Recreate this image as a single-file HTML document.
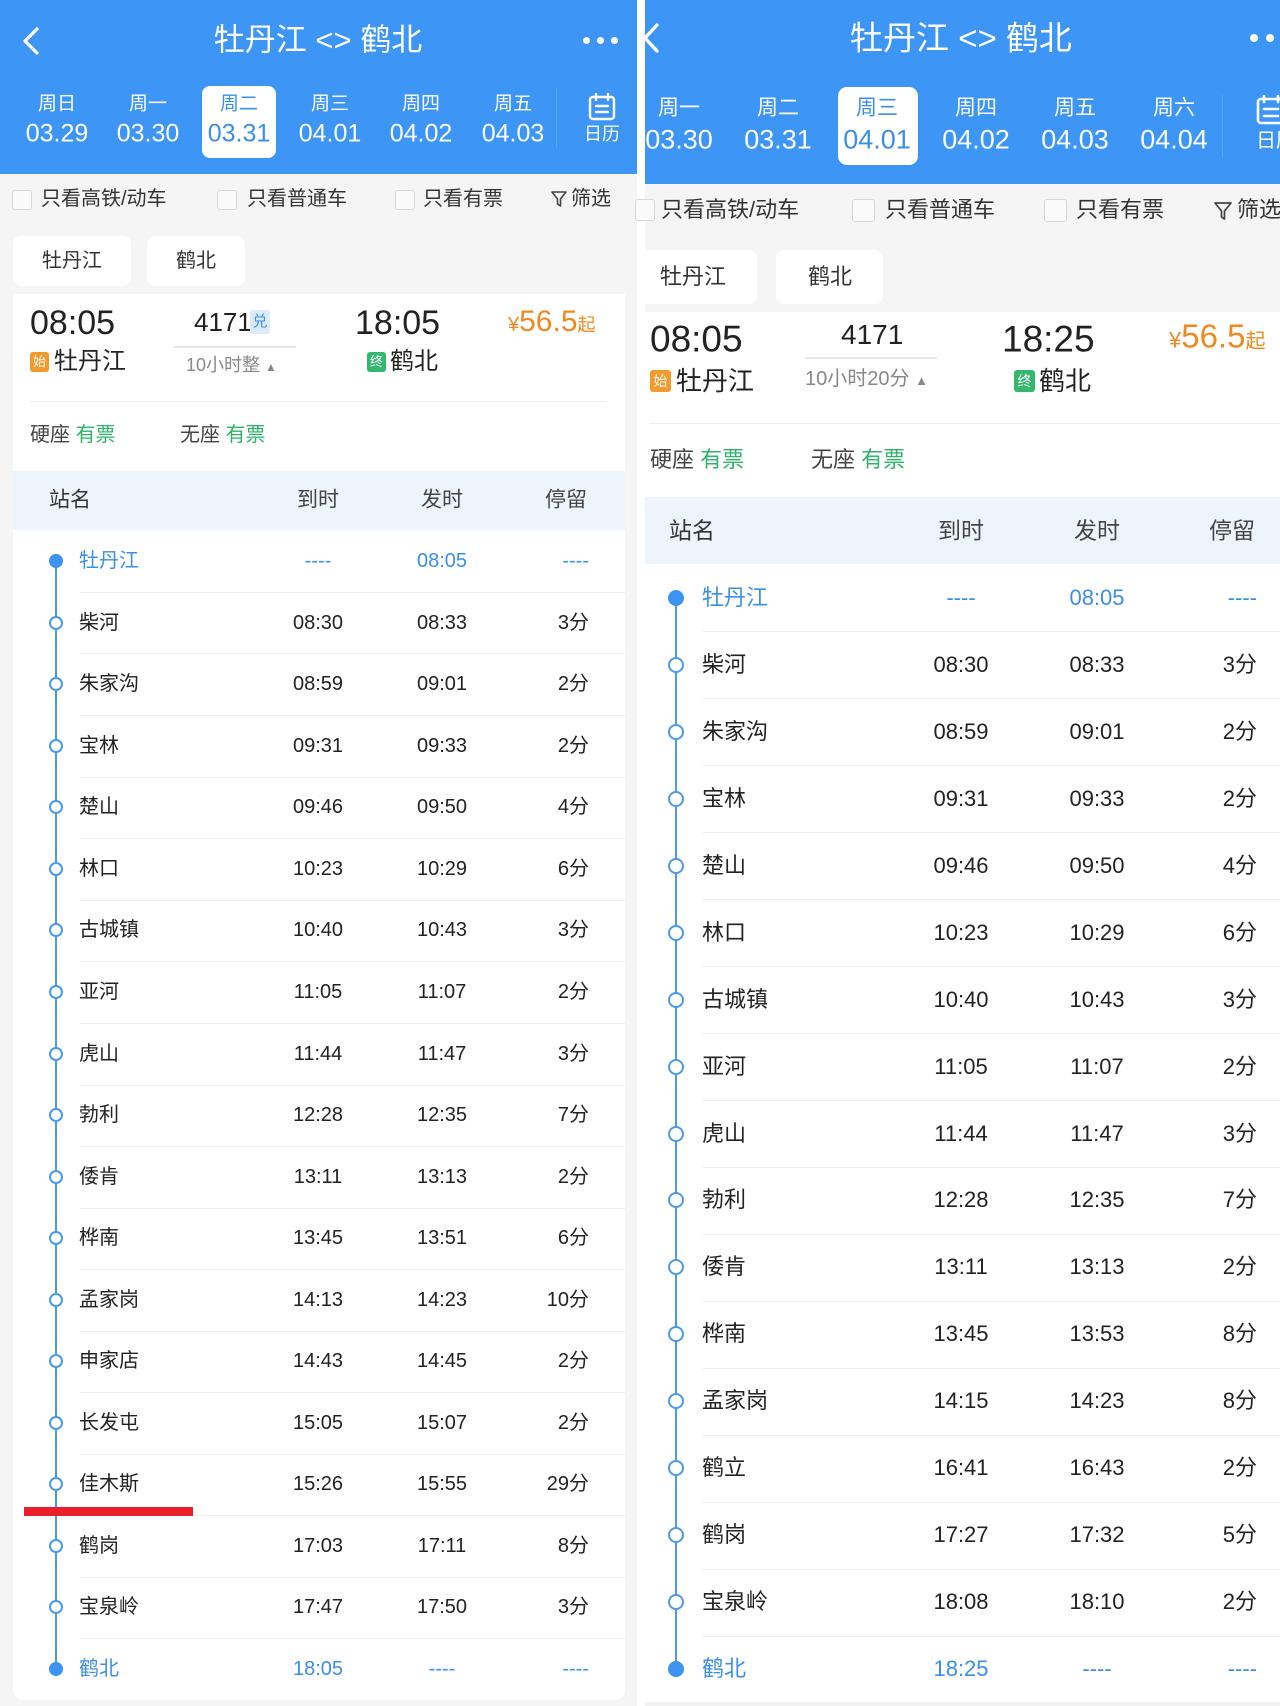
<!DOCTYPE html>
<html><head><meta charset="utf-8">
<style>
*{margin:0;padding:0;box-sizing:border-box}
body{width:1280px;height:1706px;position:relative;overflow:hidden;background:#fff;font-family:"Liberation Sans","Noto Sans CJK SC",sans-serif;color:#222}
.a{position:absolute}
.c{position:absolute;transform:translate(-50%,-50%);white-space:nowrap;line-height:1}
.l{position:absolute;transform:translate(0,-50%);white-space:nowrap;line-height:1}
.r{position:absolute;transform:translate(-100%,-50%);white-space:nowrap;line-height:1}
.w{color:#fff}
.b{color:#3b8fe8}
.g{color:#2db46a}
.gr{color:#666}
.cb{position:absolute;border:1.5px solid #d6d6d6;border-radius:3px;background:#fafafa}
.chip{position:absolute;background:#fff;border-radius:8px}
.sep{position:absolute;height:1px;background:#efefef}
.dot{position:absolute;border:2px solid #4a9ae8;background:#fff;border-radius:50%;transform:translate(-50%,-50%)}
.fd{position:absolute;background:#3d93f0;border-radius:50%;transform:translate(-50%,-50%)}
.L{font-size:20px}
.R{font-size:22px}
</style></head><body>

<!-- LEFT PANEL -->
<div class="a" style="left:0;top:0;width:637px;height:1706px;background:#f5f5f5"></div>
<div class="a" style="left:0;top:0;width:637px;height:174px;background:#3d96f6"></div>
<svg class="a" style="left:20px;top:26px" width="22" height="30" viewBox="0 0 22 30"><path d="M17 3 L5 15 L17 27" fill="none" stroke="#fff" stroke-width="3.2" stroke-linecap="round" stroke-linejoin="round"/></svg>
<div class="c w" style="left:318px;top:40px;font-size:31px">牡丹江 &lt;&gt; 鹤北</div>
<div class="a" style="left:583px;top:37px;width:7px;height:7px;border-radius:50%;background:#fff"></div>
<div class="a" style="left:597px;top:37px;width:7px;height:7px;border-radius:50%;background:#fff"></div>
<div class="a" style="left:611px;top:37px;width:7px;height:7px;border-radius:50%;background:#fff"></div>
<div class="a" style="left:202px;top:86px;width:74px;height:72px;background:#fff;border-radius:8px"></div>
<div class="c w" style="left:57px;top:104px;font-size:19px">周日</div><div class="c w" style="left:57px;top:134px;font-size:25px">03.29</div>
<div class="c w" style="left:148px;top:104px;font-size:19px">周一</div><div class="c w" style="left:148px;top:134px;font-size:25px">03.30</div>
<div class="c b" style="left:239px;top:104px;font-size:19px">周二</div><div class="c b" style="left:239px;top:134px;font-size:25px">03.31</div>
<div class="c w" style="left:330px;top:104px;font-size:19px">周三</div><div class="c w" style="left:330px;top:134px;font-size:25px">04.01</div>
<div class="c w" style="left:421px;top:104px;font-size:19px">周四</div><div class="c w" style="left:421px;top:134px;font-size:25px">04.02</div>
<div class="c w" style="left:513px;top:104px;font-size:19px">周五</div><div class="c w" style="left:513px;top:134px;font-size:25px">04.03</div>
<div class="a" style="left:556px;top:88px;width:1px;height:60px;background:#5aa6f6"></div>
<svg class="a" style="left:588px;top:93px" width="28" height="28" viewBox="0 0 28 28"><rect x="2" y="4" width="24" height="22" rx="3" fill="none" stroke="#fff" stroke-width="2.4"/><path d="M8 1v6M20 1v6M8 13h12M8 19h12" stroke="#fff" stroke-width="2.4" stroke-linecap="round"/></svg>
<div class="c w" style="left:602px;top:134px;font-size:18px">日历</div>

<div class="cb" style="left:12px;top:190px;width:20px;height:20px"></div>
<div class="l" style="left:41px;top:199px;font-size:20px;color:#333">只看高铁/动车</div>
<div class="cb" style="left:217px;top:190px;width:20px;height:20px"></div>
<div class="l" style="left:247px;top:199px;font-size:20px;color:#333">只看普通车</div>
<div class="cb" style="left:395px;top:190px;width:20px;height:20px"></div>
<div class="l" style="left:423px;top:199px;font-size:20px;color:#333">只看有票</div>
<svg class="a" style="left:551px;top:190px" width="16" height="18" viewBox="0 0 16 18"><path d="M1 2h14l-5.5 7v7l-3-2V9z" fill="none" stroke="#444" stroke-width="1.6" stroke-linejoin="round"/></svg>
<div class="l" style="left:571px;top:199px;font-size:20px;color:#333">筛选</div>

<div class="chip" style="left:13px;top:236px;width:118px;height:50px"></div>
<div class="c" style="left:72px;top:261px;font-size:20px;color:#333">牡丹江</div>
<div class="chip" style="left:147px;top:236px;width:98px;height:50px"></div>
<div class="c" style="left:196px;top:261px;font-size:20px;color:#333">鹤北</div>

<div class="a" style="left:13px;top:294px;width:612px;height:1406px;background:#fff;border-radius:0 0 10px 10px"></div>
<div class="l" style="left:30px;top:323px;font-size:34px">08:05</div>
<div class="l" style="left:194px;top:322px;font-size:26px">4171</div>
<div class="a" style="left:250px;top:310px;width:20px;height:24px;background:#dceafb;border-radius:3px;color:#3b8fe8;font-size:15px;line-height:24px;text-align:center">兑</div>
<div class="a" style="left:174px;top:346px;width:122px;height:2px;background:#e6e6e6"></div>
<div class="l gr" style="left:186px;top:365px;font-size:18px;color:#888">10小时整 <span style="font-size:12px">▲</span></div>
<div class="l" style="left:355px;top:323px;font-size:34px">18:05</div>
<div class="l" style="left:508px;top:322px;color:#f0891f"><span style="font-size:20px">¥</span><span style="font-size:30px">56.5</span><span style="font-size:18px">起</span></div>
<div class="a" style="left:30px;top:352px;width:19px;height:20px;background:#f39a2c;border-radius:3px;color:#fff;font-size:13px;line-height:20px;text-align:center">始</div>
<div class="l" style="left:54px;top:362px;font-size:24px">牡丹江</div>
<div class="a" style="left:367px;top:352px;width:19px;height:20px;background:#33b86e;border-radius:3px;color:#fff;font-size:13px;line-height:20px;text-align:center">终</div>
<div class="l" style="left:390px;top:362px;font-size:24px">鹤北</div>
<div class="a" style="left:30px;top:401px;width:576px;height:1px;background:#ececec"></div>
<div class="l" style="left:30px;top:435px;font-size:20px;color:#444">硬座 <span class="g">有票</span></div>
<div class="l" style="left:180px;top:435px;font-size:20px;color:#444">无座 <span class="g">有票</span></div>

<div class="a" style="left:13px;top:471px;width:612px;height:59px;background:#eef4fc"></div>
<div class="l" style="left:49px;top:500px;font-size:21px;color:#333">站名</div>
<div class="c" style="left:318px;top:500px;font-size:21px;color:#444">到时</div>
<div class="c" style="left:442px;top:500px;font-size:21px;color:#444">发时</div>
<div class="c" style="left:566px;top:500px;font-size:21px;color:#444">停留</div>

<div class="a" style="left:55px;top:561px;width:2px;height:1108px;background:#4a9ae8"></div>
<div class="sep" style="left:80px;top:592px;width:545px"></div>
<div class="sep" style="left:80px;top:653px;width:545px"></div>
<div class="sep" style="left:80px;top:715px;width:545px"></div>
<div class="sep" style="left:80px;top:777px;width:545px"></div>
<div class="sep" style="left:80px;top:838px;width:545px"></div>
<div class="sep" style="left:80px;top:900px;width:545px"></div>
<div class="sep" style="left:80px;top:961px;width:545px"></div>
<div class="sep" style="left:80px;top:1023px;width:545px"></div>
<div class="sep" style="left:80px;top:1085px;width:545px"></div>
<div class="sep" style="left:80px;top:1146px;width:545px"></div>
<div class="sep" style="left:80px;top:1208px;width:545px"></div>
<div class="sep" style="left:80px;top:1269px;width:545px"></div>
<div class="sep" style="left:80px;top:1331px;width:545px"></div>
<div class="sep" style="left:80px;top:1392px;width:545px"></div>
<div class="sep" style="left:80px;top:1454px;width:545px"></div>
<div class="sep" style="left:80px;top:1515px;width:545px"></div>
<div class="sep" style="left:80px;top:1577px;width:545px"></div>
<div class="sep" style="left:80px;top:1638px;width:545px"></div>

<div class="fd" style="left:56px;top:561px;width:14px;height:14px"></div>
<div class="l L b" style="left:79px;top:561px">牡丹江</div><div class="c L b" style="left:318px;top:561px">----</div><div class="c L b" style="left:442px;top:561px">08:05</div><div class="r L b" style="left:589px;top:561px">----</div>
<div class="dot" style="left:56px;top:623px;width:14px;height:14px"></div>
<div class="l L" style="left:79px;top:623px">柴河</div><div class="c L" style="left:318px;top:623px">08:30</div><div class="c L" style="left:442px;top:623px">08:33</div><div class="r L" style="left:589px;top:623px">3分</div>
<div class="dot" style="left:56px;top:684px;width:14px;height:14px"></div>
<div class="l L" style="left:79px;top:684px">朱家沟</div><div class="c L" style="left:318px;top:684px">08:59</div><div class="c L" style="left:442px;top:684px">09:01</div><div class="r L" style="left:589px;top:684px">2分</div>
<div class="dot" style="left:56px;top:746px;width:14px;height:14px"></div>
<div class="l L" style="left:79px;top:746px">宝林</div><div class="c L" style="left:318px;top:746px">09:31</div><div class="c L" style="left:442px;top:746px">09:33</div><div class="r L" style="left:589px;top:746px">2分</div>
<div class="dot" style="left:56px;top:807px;width:14px;height:14px"></div>
<div class="l L" style="left:79px;top:807px">楚山</div><div class="c L" style="left:318px;top:807px">09:46</div><div class="c L" style="left:442px;top:807px">09:50</div><div class="r L" style="left:589px;top:807px">4分</div>
<div class="dot" style="left:56px;top:869px;width:14px;height:14px"></div>
<div class="l L" style="left:79px;top:869px">林口</div><div class="c L" style="left:318px;top:869px">10:23</div><div class="c L" style="left:442px;top:869px">10:29</div><div class="r L" style="left:589px;top:869px">6分</div>
<div class="dot" style="left:56px;top:930px;width:14px;height:14px"></div>
<div class="l L" style="left:79px;top:930px">古城镇</div><div class="c L" style="left:318px;top:930px">10:40</div><div class="c L" style="left:442px;top:930px">10:43</div><div class="r L" style="left:589px;top:930px">3分</div>
<div class="dot" style="left:56px;top:992px;width:14px;height:14px"></div>
<div class="l L" style="left:79px;top:992px">亚河</div><div class="c L" style="left:318px;top:992px">11:05</div><div class="c L" style="left:442px;top:992px">11:07</div><div class="r L" style="left:589px;top:992px">2分</div>
<div class="dot" style="left:56px;top:1054px;width:14px;height:14px"></div>
<div class="l L" style="left:79px;top:1054px">虎山</div><div class="c L" style="left:318px;top:1054px">11:44</div><div class="c L" style="left:442px;top:1054px">11:47</div><div class="r L" style="left:589px;top:1054px">3分</div>
<div class="dot" style="left:56px;top:1115px;width:14px;height:14px"></div>
<div class="l L" style="left:79px;top:1115px">勃利</div><div class="c L" style="left:318px;top:1115px">12:28</div><div class="c L" style="left:442px;top:1115px">12:35</div><div class="r L" style="left:589px;top:1115px">7分</div>
<div class="dot" style="left:56px;top:1177px;width:14px;height:14px"></div>
<div class="l L" style="left:79px;top:1177px">倭肯</div><div class="c L" style="left:318px;top:1177px">13:11</div><div class="c L" style="left:442px;top:1177px">13:13</div><div class="r L" style="left:589px;top:1177px">2分</div>
<div class="dot" style="left:56px;top:1238px;width:14px;height:14px"></div>
<div class="l L" style="left:79px;top:1238px">桦南</div><div class="c L" style="left:318px;top:1238px">13:45</div><div class="c L" style="left:442px;top:1238px">13:51</div><div class="r L" style="left:589px;top:1238px">6分</div>
<div class="dot" style="left:56px;top:1300px;width:14px;height:14px"></div>
<div class="l L" style="left:79px;top:1300px">孟家岗</div><div class="c L" style="left:318px;top:1300px">14:13</div><div class="c L" style="left:442px;top:1300px">14:23</div><div class="r L" style="left:589px;top:1300px">10分</div>
<div class="dot" style="left:56px;top:1361px;width:14px;height:14px"></div>
<div class="l L" style="left:79px;top:1361px">申家店</div><div class="c L" style="left:318px;top:1361px">14:43</div><div class="c L" style="left:442px;top:1361px">14:45</div><div class="r L" style="left:589px;top:1361px">2分</div>
<div class="dot" style="left:56px;top:1423px;width:14px;height:14px"></div>
<div class="l L" style="left:79px;top:1423px">长发屯</div><div class="c L" style="left:318px;top:1423px">15:05</div><div class="c L" style="left:442px;top:1423px">15:07</div><div class="r L" style="left:589px;top:1423px">2分</div>
<div class="dot" style="left:56px;top:1484px;width:14px;height:14px"></div>
<div class="l L" style="left:79px;top:1484px">佳木斯</div><div class="c L" style="left:318px;top:1484px">15:26</div><div class="c L" style="left:442px;top:1484px">15:55</div><div class="r L" style="left:589px;top:1484px">29分</div>
<div class="dot" style="left:56px;top:1546px;width:14px;height:14px"></div>
<div class="l L" style="left:79px;top:1546px">鹤岗</div><div class="c L" style="left:318px;top:1546px">17:03</div><div class="c L" style="left:442px;top:1546px">17:11</div><div class="r L" style="left:589px;top:1546px">8分</div>
<div class="dot" style="left:56px;top:1607px;width:14px;height:14px"></div>
<div class="l L" style="left:79px;top:1607px">宝泉岭</div><div class="c L" style="left:318px;top:1607px">17:47</div><div class="c L" style="left:442px;top:1607px">17:50</div><div class="r L" style="left:589px;top:1607px">3分</div>
<div class="fd" style="left:56px;top:1669px;width:14px;height:14px"></div>
<div class="l L b" style="left:79px;top:1669px">鹤北</div><div class="c L b" style="left:318px;top:1669px">18:05</div><div class="c L b" style="left:442px;top:1669px">----</div><div class="r L b" style="left:589px;top:1669px">----</div>
<div class="a" style="left:24px;top:1507px;width:169px;height:9px;background:#e8202c"></div>

<!-- RIGHT PANEL -->
<div class="a" style="left:645px;top:0;width:635px;height:1706px;background:#f5f5f5"></div>
<div class="a" style="left:645px;top:0;width:635px;height:184px;background:#3d96f6"></div>
<svg class="a" style="left:645px;top:22px" width="16" height="32" viewBox="0 0 16 32"><path d="M12 3 L0 16 L12 29" fill="none" stroke="#fff" stroke-width="3.4" stroke-linecap="round" stroke-linejoin="round"/></svg>
<div class="c w" style="left:961px;top:38px;font-size:33px">牡丹江 &lt;&gt; 鹤北</div>
<div class="a" style="left:1250px;top:34px;width:8px;height:8px;border-radius:50%;background:#fff"></div>
<div class="a" style="left:1266px;top:34px;width:8px;height:8px;border-radius:50%;background:#fff"></div>
<div class="a" style="left:838px;top:87px;width:80px;height:78px;background:#fff;border-radius:9px"></div>
<div class="c w" style="left:679px;top:108px;font-size:21px">周一</div><div class="c w" style="left:679px;top:140px;font-size:27px">03.30</div>
<div class="c w" style="left:778px;top:108px;font-size:21px">周二</div><div class="c w" style="left:778px;top:140px;font-size:27px">03.31</div>
<div class="c b" style="left:877px;top:108px;font-size:21px">周三</div><div class="c b" style="left:877px;top:140px;font-size:27px">04.01</div>
<div class="c w" style="left:976px;top:108px;font-size:21px">周四</div><div class="c w" style="left:976px;top:140px;font-size:27px">04.02</div>
<div class="c w" style="left:1075px;top:108px;font-size:21px">周五</div><div class="c w" style="left:1075px;top:140px;font-size:27px">04.03</div>
<div class="c w" style="left:1174px;top:108px;font-size:21px">周六</div><div class="c w" style="left:1174px;top:140px;font-size:27px">04.04</div>
<div class="a" style="left:1222px;top:95px;width:1px;height:62px;background:#5aa6f6"></div>
<svg class="a" style="left:1256px;top:95px" width="30" height="30" viewBox="0 0 30 30"><rect x="2" y="4" width="26" height="24" rx="3" fill="none" stroke="#fff" stroke-width="2.6"/><path d="M8 1v6M22 1v6M8 14h14M8 21h14" stroke="#fff" stroke-width="2.6" stroke-linecap="round"/></svg>
<div class="l w" style="left:1256px;top:141px;font-size:20px">日历</div>

<div class="cb" style="left:635px;top:199px;width:20px;height:22px"></div>
<div class="l" style="left:661px;top:210px;font-size:22px;color:#333">只看高铁/动车</div>
<div class="cb" style="left:852px;top:199px;width:23px;height:23px"></div>
<div class="l" style="left:885px;top:210px;font-size:22px;color:#333">只看普通车</div>
<div class="cb" style="left:1044px;top:199px;width:23px;height:23px"></div>
<div class="l" style="left:1076px;top:210px;font-size:22px;color:#333">只看有票</div>
<svg class="a" style="left:1214px;top:201px" width="18" height="20" viewBox="0 0 18 20"><path d="M1 2h16l-6.5 8v8l-3-2v-6z" fill="none" stroke="#444" stroke-width="1.7" stroke-linejoin="round"/></svg>
<div class="l" style="left:1237px;top:210px;font-size:22px;color:#333">筛选</div>

<div class="chip" style="left:637px;top:250px;width:120px;height:54px"></div>
<div class="c" style="left:693px;top:277px;font-size:22px;color:#333">牡丹江</div>
<div class="chip" style="left:776px;top:250px;width:107px;height:54px"></div>
<div class="c" style="left:830px;top:277px;font-size:22px;color:#333">鹤北</div>

<div class="a" style="left:645px;top:312px;width:635px;height:1390px;background:#fff"></div>
<div class="a" style="left:645px;top:1702px;width:635px;height:4px;background:#f2f2f2"></div>
<div class="l" style="left:650px;top:339px;font-size:37px">08:05</div>
<div class="l" style="left:841px;top:335px;font-size:28px">4171</div>
<div class="a" style="left:805px;top:357px;width:132px;height:2px;background:#e6e6e6"></div>
<div class="l" style="left:805px;top:379px;font-size:20px;color:#888">10小时20分 <span style="font-size:13px">▲</span></div>
<div class="l" style="left:1002px;top:339px;font-size:37px">18:25</div>
<div class="l" style="left:1169px;top:336px;color:#f0891f"><span style="font-size:22px">¥</span><span style="font-size:33px">56.5</span><span style="font-size:20px">起</span></div>
<div class="a" style="left:650px;top:370px;width:21px;height:22px;background:#f39a2c;border-radius:3px;color:#fff;font-size:14px;line-height:22px;text-align:center">始</div>
<div class="l" style="left:676px;top:381px;font-size:26px">牡丹江</div>
<div class="a" style="left:1014px;top:370px;width:21px;height:22px;background:#33b86e;border-radius:3px;color:#fff;font-size:14px;line-height:22px;text-align:center">终</div>
<div class="l" style="left:1039px;top:381px;font-size:26px">鹤北</div>
<div class="a" style="left:650px;top:423px;width:630px;height:1px;background:#ececec"></div>
<div class="l" style="left:650px;top:460px;font-size:22px;color:#444">硬座 <span class="g">有票</span></div>
<div class="l" style="left:811px;top:460px;font-size:22px;color:#444">无座 <span class="g">有票</span></div>

<div class="a" style="left:645px;top:497px;width:635px;height:67px;background:#eef4fc"></div>
<div class="l" style="left:669px;top:531px;font-size:23px;color:#333">站名</div>
<div class="c" style="left:961px;top:531px;font-size:23px;color:#444">到时</div>
<div class="c" style="left:1097px;top:531px;font-size:23px;color:#444">发时</div>
<div class="c" style="left:1232px;top:531px;font-size:23px;color:#444">停留</div>

<div class="a" style="left:675px;top:598px;width:2px;height:1071px;background:#4a9ae8"></div>
<div class="sep" style="left:702px;top:631px;width:578px"></div>
<div class="sep" style="left:702px;top:698px;width:578px"></div>
<div class="sep" style="left:702px;top:765px;width:578px"></div>
<div class="sep" style="left:702px;top:832px;width:578px"></div>
<div class="sep" style="left:702px;top:899px;width:578px"></div>
<div class="sep" style="left:702px;top:966px;width:578px"></div>
<div class="sep" style="left:702px;top:1033px;width:578px"></div>
<div class="sep" style="left:702px;top:1100px;width:578px"></div>
<div class="sep" style="left:702px;top:1167px;width:578px"></div>
<div class="sep" style="left:702px;top:1234px;width:578px"></div>
<div class="sep" style="left:702px;top:1301px;width:578px"></div>
<div class="sep" style="left:702px;top:1368px;width:578px"></div>
<div class="sep" style="left:702px;top:1435px;width:578px"></div>
<div class="sep" style="left:702px;top:1502px;width:578px"></div>
<div class="sep" style="left:702px;top:1569px;width:578px"></div>
<div class="sep" style="left:702px;top:1636px;width:578px"></div>

<div class="fd" style="left:676px;top:598px;width:16px;height:16px"></div>
<div class="l R b" style="left:702px;top:598px">牡丹江</div><div class="c R b" style="left:961px;top:598px">----</div><div class="c R b" style="left:1097px;top:598px">08:05</div><div class="r R b" style="left:1257px;top:598px">----</div>
<div class="dot" style="left:676px;top:665px;width:16px;height:16px"></div>
<div class="l R" style="left:702px;top:665px">柴河</div><div class="c R" style="left:961px;top:665px">08:30</div><div class="c R" style="left:1097px;top:665px">08:33</div><div class="r R" style="left:1257px;top:665px">3分</div>
<div class="dot" style="left:676px;top:732px;width:16px;height:16px"></div>
<div class="l R" style="left:702px;top:732px">朱家沟</div><div class="c R" style="left:961px;top:732px">08:59</div><div class="c R" style="left:1097px;top:732px">09:01</div><div class="r R" style="left:1257px;top:732px">2分</div>
<div class="dot" style="left:676px;top:799px;width:16px;height:16px"></div>
<div class="l R" style="left:702px;top:799px">宝林</div><div class="c R" style="left:961px;top:799px">09:31</div><div class="c R" style="left:1097px;top:799px">09:33</div><div class="r R" style="left:1257px;top:799px">2分</div>
<div class="dot" style="left:676px;top:866px;width:16px;height:16px"></div>
<div class="l R" style="left:702px;top:866px">楚山</div><div class="c R" style="left:961px;top:866px">09:46</div><div class="c R" style="left:1097px;top:866px">09:50</div><div class="r R" style="left:1257px;top:866px">4分</div>
<div class="dot" style="left:676px;top:933px;width:16px;height:16px"></div>
<div class="l R" style="left:702px;top:933px">林口</div><div class="c R" style="left:961px;top:933px">10:23</div><div class="c R" style="left:1097px;top:933px">10:29</div><div class="r R" style="left:1257px;top:933px">6分</div>
<div class="dot" style="left:676px;top:1000px;width:16px;height:16px"></div>
<div class="l R" style="left:702px;top:1000px">古城镇</div><div class="c R" style="left:961px;top:1000px">10:40</div><div class="c R" style="left:1097px;top:1000px">10:43</div><div class="r R" style="left:1257px;top:1000px">3分</div>
<div class="dot" style="left:676px;top:1067px;width:16px;height:16px"></div>
<div class="l R" style="left:702px;top:1067px">亚河</div><div class="c R" style="left:961px;top:1067px">11:05</div><div class="c R" style="left:1097px;top:1067px">11:07</div><div class="r R" style="left:1257px;top:1067px">2分</div>
<div class="dot" style="left:676px;top:1134px;width:16px;height:16px"></div>
<div class="l R" style="left:702px;top:1134px">虎山</div><div class="c R" style="left:961px;top:1134px">11:44</div><div class="c R" style="left:1097px;top:1134px">11:47</div><div class="r R" style="left:1257px;top:1134px">3分</div>
<div class="dot" style="left:676px;top:1200px;width:16px;height:16px"></div>
<div class="l R" style="left:702px;top:1200px">勃利</div><div class="c R" style="left:961px;top:1200px">12:28</div><div class="c R" style="left:1097px;top:1200px">12:35</div><div class="r R" style="left:1257px;top:1200px">7分</div>
<div class="dot" style="left:676px;top:1267px;width:16px;height:16px"></div>
<div class="l R" style="left:702px;top:1267px">倭肯</div><div class="c R" style="left:961px;top:1267px">13:11</div><div class="c R" style="left:1097px;top:1267px">13:13</div><div class="r R" style="left:1257px;top:1267px">2分</div>
<div class="dot" style="left:676px;top:1334px;width:16px;height:16px"></div>
<div class="l R" style="left:702px;top:1334px">桦南</div><div class="c R" style="left:961px;top:1334px">13:45</div><div class="c R" style="left:1097px;top:1334px">13:53</div><div class="r R" style="left:1257px;top:1334px">8分</div>
<div class="dot" style="left:676px;top:1401px;width:16px;height:16px"></div>
<div class="l R" style="left:702px;top:1401px">孟家岗</div><div class="c R" style="left:961px;top:1401px">14:15</div><div class="c R" style="left:1097px;top:1401px">14:23</div><div class="r R" style="left:1257px;top:1401px">8分</div>
<div class="dot" style="left:676px;top:1468px;width:16px;height:16px"></div>
<div class="l R" style="left:702px;top:1468px">鹤立</div><div class="c R" style="left:961px;top:1468px">16:41</div><div class="c R" style="left:1097px;top:1468px">16:43</div><div class="r R" style="left:1257px;top:1468px">2分</div>
<div class="dot" style="left:676px;top:1535px;width:16px;height:16px"></div>
<div class="l R" style="left:702px;top:1535px">鹤岗</div><div class="c R" style="left:961px;top:1535px">17:27</div><div class="c R" style="left:1097px;top:1535px">17:32</div><div class="r R" style="left:1257px;top:1535px">5分</div>
<div class="dot" style="left:676px;top:1602px;width:16px;height:16px"></div>
<div class="l R" style="left:702px;top:1602px">宝泉岭</div><div class="c R" style="left:961px;top:1602px">18:08</div><div class="c R" style="left:1097px;top:1602px">18:10</div><div class="r R" style="left:1257px;top:1602px">2分</div>
<div class="fd" style="left:676px;top:1669px;width:16px;height:16px"></div>
<div class="l R b" style="left:702px;top:1669px">鹤北</div><div class="c R b" style="left:961px;top:1669px">18:25</div><div class="c R b" style="left:1097px;top:1669px">----</div><div class="r R b" style="left:1257px;top:1669px">----</div>

</body></html>
